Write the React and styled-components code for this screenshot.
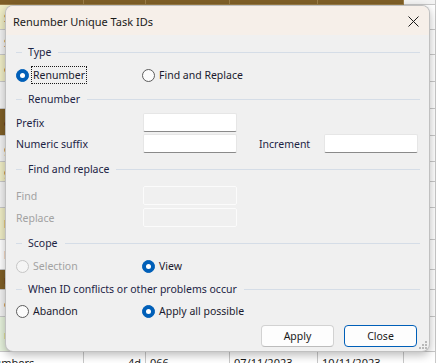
import React from 'react';
import styled, { createGlobalStyle } from 'styled-components';

const GlobalStyle = createGlobalStyle`
  html, body { margin: 0; padding: 0; background: #ffffff; overflow: hidden; }
  body { font-family: "Noto Sans", "Segoe UI", sans-serif; }
  #root { width: 436px; height: 363px; }
`;

const Screen = styled.div`
  position: relative;
  width: 436px;
  height: 363px;
  overflow: hidden;
  background: #ffffff;
`;

/* ---------- background spreadsheet ---------- */
const Sheet = styled.div`
  display: grid;
  grid-template-columns: 84px 62px 84px 88px 86px 32px;
  grid-auto-rows: auto;
  font-family: "Noto Sans", sans-serif;
  font-size: 11px;
  color: #1a1a1a;
`;

const Cell = styled.div`
  height: ${(p) => p.$h}px;
  box-sizing: border-box;
  background: ${(p) => p.$bg || '#ffffff'};
  border-right: 1px solid ${(p) => p.$line || '#c8c8c8'};
  border-bottom: 1px solid ${(p) => p.$line || '#c8c8c8'};
  overflow: hidden;
  white-space: nowrap;
  padding: 0 4px;
  text-align: ${(p) => (p.$right ? 'right' : 'left')};
  line-height: ${(p) => p.$h}px;
  font-weight: ${(p) => (p.$bold ? 700 : 400)};
  color: ${(p) => p.$color || '#1a1a1a'};
`;

const BottomCell = styled(Cell)`
  line-height: 22px;
  text-indent: ${(p) => p.$shift || 0}px;
`;

const leftRows = [
  { h: 25, bg: '#efedc6', t: 'Si' },
  { h: 25, bg: '#f2f2f2', t: 'Si' },
  { h: 27, bg: '#efedc6', t: 'e' },
  { h: 27, bg: '#f2f2f2', t: '' },
  { h: 27, bg: '#7f5f27', t: 'c', bold: true },
  { h: 26, bg: '#f2f2f2', t: 'g' },
  { h: 20, bg: '#efedc6', t: 'g' },
  { h: 26, bg: '#f2f2f2', t: '' },
  { h: 32, bg: '#efedc6', t: 'l' },
  { h: 30, bg: '#ffffff', t: 'l', color: '#2a2a80' },
  { h: 20, bg: '#7f5f27', t: 'r', bold: true },
  { h: 27, bg: '#f2f2f2', t: 'c' },
  { h: 35, bg: '#e6f2dc', t: 'r', color: '#3a8a3a' },
];

function Background() {
  const cols = [0, 1, 2, 3, 4, 5];
  return (
    <Sheet>
      {cols.map((c) => (
        <Cell key={'h' + c} $h={5} $bg={c < 5 ? '#7f5f27' : '#f4f4f4'} $line={c < 5 ? '#9c7e48' : '#c8c8c8'} />
      ))}
      {leftRows.map((r, i) =>
        cols.map((c) => (
          <Cell
            key={i + '-' + c}
            $h={r.h}
            $bg={c === 0 ? r.bg : '#ffffff'}
            $bold={r.bold}
            $color={r.color}
          >
            {c === 0 ? r.t : ''}
          </Cell>
        ))
      )}
      <BottomCell $h={22} $shift={-18}>Numbers</BottomCell>
      <BottomCell $h={22} $right>4d</BottomCell>
      <BottomCell $h={22}>066</BottomCell>
      <BottomCell $h={22}>07/11/2023</BottomCell>
      <BottomCell $h={22}>10/11/2023</BottomCell>
      <BottomCell $h={22} />
    </Sheet>
  );
}

/* ---------- dialog ---------- */
const Dialog = styled.div`
  position: absolute;
  left: 5px;
  top: 5px;
  width: 425px;
  height: 347px;
  box-sizing: border-box;
  border: 1px solid rgba(0, 0, 0, 0.2);
  border-radius: 8px;
  background: #f0f0f0;
  box-shadow: 0 3px 10px rgba(0, 0, 0, 0.28);
  overflow: hidden;
  display: flex;
  flex-direction: column;
  font-family: "Noto Sans", "Segoe UI", sans-serif;
  font-size: 10.5px;
  color: #1c2445;
`;

const TitleBar = styled.div`
  height: 29px;
  flex: none;
  display: flex;
  align-items: center;
  justify-content: space-between;
  padding: 1px 10px 0 7px;
  box-sizing: border-box;
  background: #f6efe9;
  color: #1a1a1a;
`;

const Title = styled.span`
  font-size: 11px;
`;

const CloseX = styled.svg`
  width: 11px;
  height: 11px;
`;

const Body = styled.div`
  flex: 1;
  display: flex;
  flex-direction: column;
  padding: 9px 9px 0 10px;
`;

const Section = styled.div`
  display: flex;
  flex-direction: column;
  gap: ${(p) => p.$gap ?? 6}px;
  margin-top: ${(p) => p.$top ?? 0}px;
`;

const GroupHeader = styled.div`
  display: flex;
  align-items: center;
  height: 16px;
  gap: 6px;
  color: #1c2445;
  &::before {
    content: '';
    width: 6px;
    height: 1px;
    background: #d5dde7;
  }
  &::after {
    content: '';
    flex: 1;
    height: 1px;
    margin-left: 1px;
    background: #d5dde7;
  }
`;

const RadioRow = styled.div`
  display: grid;
  grid-template-columns: 126px auto;
  align-items: center;
  height: 18px;
`;

const RadioLabel = styled.label`
  display: flex;
  align-items: center;
  gap: 2px;
  color: ${(p) => (p.$disabled ? '#a2a2a2' : '#1a1a2e')};
`;

const RadioCircle = styled.span`
  position: relative;
  width: 13px;
  height: 13px;
  box-sizing: border-box;
  border-radius: 50%;
  flex: none;
  background: ${(p) => (p.$checked ? '#005fb8' : p.$disabled ? '#f5f5f5' : '#fbfbfb')};
  border: 1px solid ${(p) => (p.$checked ? '#005fb8' : p.$disabled ? '#c6c6c6' : '#5c5c5c')};
  &::after {
    content: '';
    display: ${(p) => (p.$checked ? 'block' : 'none')};
    position: absolute;
    left: 50%;
    top: 50%;
    width: 5px;
    height: 5px;
    margin: -2.5px 0 0 -2.5px;
    border-radius: 50%;
    background: #ffffff;
  }
`;

const RadioText = styled.span`
  padding: 0 1px;
  line-height: 16px;
  border: 1px dotted ${(p) => (p.$focus ? '#1a1a1a' : 'transparent')};
`;

function Radio({ checked, disabled, focus, children }) {
  return (
    <RadioLabel $disabled={disabled}>
      <RadioCircle $checked={checked} $disabled={disabled} />
      <RadioText $focus={focus}>{children}</RadioText>
    </RadioLabel>
  );
}

const Fields = styled.div`
  display: flex;
  flex-direction: column;
  gap: ${(p) => p.$gap ?? 2}px;
`;

const FieldRow = styled.div`
  display: grid;
  grid-template-columns: 127px 94px 87px 94px;
  align-items: center;
  height: 19px;
`;

const FieldLabel = styled.span`
  color: ${(p) => (p.$disabled ? '#a2a2a2' : '#1c2445')};
  padding-left: ${(p) => p.$indent || 0}px;
`;

const TextBox = styled.div`
  height: 19px;
  box-sizing: border-box;
  border-radius: 2px;
  background: ${(p) => (p.$disabled ? '#f0f0f0' : '#ffffff')};
  border: 1px solid ${(p) => (p.$disabled ? '#fbfbfb' : '#e6e6e6')};
  border-bottom-color: ${(p) => (p.$disabled ? '#fbfbfb' : '#8a8a8a')};
`;

const ButtonRow = styled.div`
  display: flex;
  justify-content: flex-end;
  gap: 10px;
  margin-top: 5px;
  padding-right: 3px;
`;

const Button = styled.button`
  width: 73px;
  height: 22px;
  box-sizing: border-box;
  border-radius: 4px;
  background: #fdfdfd;
  border: 1px solid ${(p) => (p.$primary ? '#005fb8' : '#d2d2d2')};
  border-bottom-color: ${(p) => (p.$primary ? '#005fb8' : '#bcbcbc')};
  font-family: "Noto Sans", "Segoe UI", sans-serif;
  font-size: 10.5px;
  color: #1a1a1a;
  padding: 0;
`;

const Grip = styled.svg`
  position: absolute;
  right: 2px;
  bottom: 2px;
  width: 8px;
  height: 8px;
`;

export default function App() {
  return (
    <Screen>
      <GlobalStyle />
      <Background />
      <Dialog>
        <TitleBar>
          <Title>Renumber Unique Task IDs</Title>
          <CloseX viewBox="0 0 11 11">
            <path d="M0.5 0.5 L10.5 10.5 M10.5 0.5 L0.5 10.5" stroke="#1a1a1a" strokeWidth="1" fill="none" />
          </CloseX>
        </TitleBar>
        <Body>
          <Section>
            <GroupHeader>Type</GroupHeader>
            <RadioRow>
              <Radio checked focus>Renumber</Radio>
              <Radio>Find and Replace</Radio>
            </RadioRow>
          </Section>
          <Section $top={7}>
            <GroupHeader>Renumber</GroupHeader>
            <Fields>
              <FieldRow>
                <FieldLabel>Prefix</FieldLabel>
                <TextBox />
              </FieldRow>
              <FieldRow>
                <FieldLabel>Numeric suffix</FieldLabel>
                <TextBox />
                <FieldLabel $indent={22}>Increment</FieldLabel>
                <TextBox />
              </FieldRow>
            </Fields>
          </Section>
          <Section $top={8} $gap={9}>
            <GroupHeader>Find and replace</GroupHeader>
            <Fields $gap={3}>
              <FieldRow>
                <FieldLabel $disabled>Find</FieldLabel>
                <TextBox $disabled />
              </FieldRow>
              <FieldRow>
                <FieldLabel $disabled>Replace</FieldLabel>
                <TextBox $disabled />
              </FieldRow>
            </Fields>
          </Section>
          <Section $top={8}>
            <GroupHeader>Scope</GroupHeader>
            <RadioRow>
              <Radio disabled>Selection</Radio>
              <Radio checked>View</Radio>
            </RadioRow>
          </Section>
          <Section $top={6} $gap={5}>
            <GroupHeader>When ID conflicts or other problems occur</GroupHeader>
            <RadioRow>
              <Radio>Abandon</Radio>
              <Radio checked>Apply all possible</Radio>
            </RadioRow>
          </Section>
          <ButtonRow>
            <Button>Apply</Button>
            <Button $primary>Close</Button>
          </ButtonRow>
        </Body>
        <Grip viewBox="0 0 8 8">
          <g fill="#b8b8b8">
            <rect x="6" y="0" width="2" height="2" />
            <rect x="3" y="3" width="2" height="2" />
            <rect x="6" y="3" width="2" height="2" />
            <rect x="0" y="6" width="2" height="2" />
            <rect x="3" y="6" width="2" height="2" />
            <rect x="6" y="6" width="2" height="2" />
          </g>
        </Grip>
      </Dialog>
    </Screen>
  );
}
